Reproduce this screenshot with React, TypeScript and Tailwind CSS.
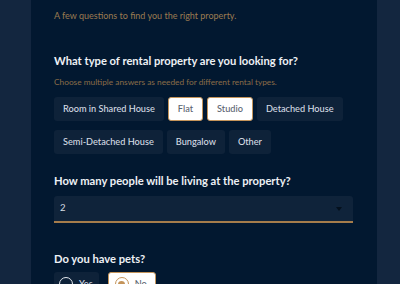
import React, { useState } from 'react';

const propertyTypes = [
  'Room in Shared House',
  'Flat',
  'Studio',
  'Detached House',
  'Semi-Detached House',
  'Bungalow',
  'Other',
];

const App = () => {
  const [selected, setSelected] = useState<string[]>(['Flat', 'Studio']);
  const [people, setPeople] = useState('2');
  const [pets, setPets] = useState('No');

  const toggle = (t: string) => {
    setSelected((s) => (s.includes(t) ? s.filter((x) => x !== t) : [...s, t]));
  };

  return (
    <div
      className="w-full h-[284px] overflow-hidden bg-[#13263f] pl-[31px]"
      style={{ fontFamily: 'Lato, "Noto Sans", sans-serif' }}
    >
      <div className="w-[346px] h-full bg-[#021830] pl-[23px] pr-[24px] pt-[10px]">
        {/* Intro */}
        <p className="text-[9px] leading-[12px] text-[#9b7b50]">
          A few questions to find you the right property.
        </p>

        {/* Property type */}
        <div className="mt-[32px]">
          <h2 className="text-[11.2px] leading-[14px] font-bold text-[#eef1f5]">
            What type of rental property are you looking for?
          </h2>
          <p className="mt-[9px] text-[8.3px] leading-[10px] text-[#8a6d48]">
            Choose multiple answers as needed for different rental types.
          </p>
          <div className="mt-[10px] flex flex-wrap gap-x-[4px] gap-y-[9px]">
            {propertyTypes.map((t) => {
              const on = selected.includes(t);
              return (
                <button
                  key={t}
                  onClick={() => toggle(t)}
                  className={
                    on
                      ? 'h-[24px] px-[9px] rounded-[3px] bg-white border border-[#c4945a] text-[9.2px] font-medium text-[#5b6470]'
                      : 'h-[24px] px-[9px] rounded-[3px] bg-[#0e2239] text-[9.2px] font-medium text-[#d5dbe3]'
                  }
                >
                  {t}
                </button>
              );
            })}
          </div>
        </div>

        {/* People */}
        <div className="mt-[20px]">
          <h2 className="text-[11.2px] leading-[14px] font-bold text-[#eef1f5]">
            How many people will be living at the property?
          </h2>
          <div className="mt-[8px] relative h-[27px] bg-[#0f233a] rounded-t-[3px] border-b-2 border-[#a57c4b] flex items-center px-[6px]">
            <select
              value={people}
              onChange={(e) => setPeople(e.target.value)}
              className="appearance-none bg-transparent w-full text-[9.6px] text-[#d5dbe3] outline-none"
            >
              {['1', '2', '3', '4', '5+'].map((n) => (
                <option key={n} value={n} className="text-black">
                  {n}
                </option>
              ))}
            </select>
            <svg
              className="absolute right-[11px] top-[11px]"
              width="6"
              height="4"
              viewBox="0 0 6 4"
            >
              <path d="M0 0h6L3 4z" fill="#04101d" />
            </svg>
          </div>
        </div>

        {/* Pets */}
        <div className="mt-[29px]">
          <h2 className="text-[11.2px] leading-[14px] font-bold text-[#eef1f5]">
            Do you have pets?
          </h2>
          <div className="mt-[6px] flex gap-[9px]">
            {['Yes', 'No'].map((o) => {
              const on = pets === o;
              return (
                <button
                  key={o}
                  onClick={() => setPets(o)}
                  className={
                    on
                      ? 'h-[24px] pl-[6px] pr-[8px] rounded-[3px] bg-white border border-[#c4945a] flex items-center gap-[6px] text-[9.2px] font-medium text-[#5b6470]'
                      : 'h-[24px] pl-[5px] pr-[6px] rounded-[3px] bg-[#0e2239] flex items-center gap-[6px] text-[9.2px] font-medium text-[#d5dbe3]'
                  }
                >
                  <span
                    className={
                      on
                        ? 'w-[14px] h-[14px] rounded-full border-[1.5px] border-[#c4945a] flex items-center justify-center'
                        : 'w-[14px] h-[14px] rounded-full border-[1.5px] border-[#e6eaef]'
                    }
                  >
                    {on && <span className="w-[7px] h-[7px] rounded-full bg-[#c4945a]" />}
                  </span>
                  {o}
                </button>
              );
            })}
          </div>
        </div>
      </div>
    </div>
  );
};

export default App;
